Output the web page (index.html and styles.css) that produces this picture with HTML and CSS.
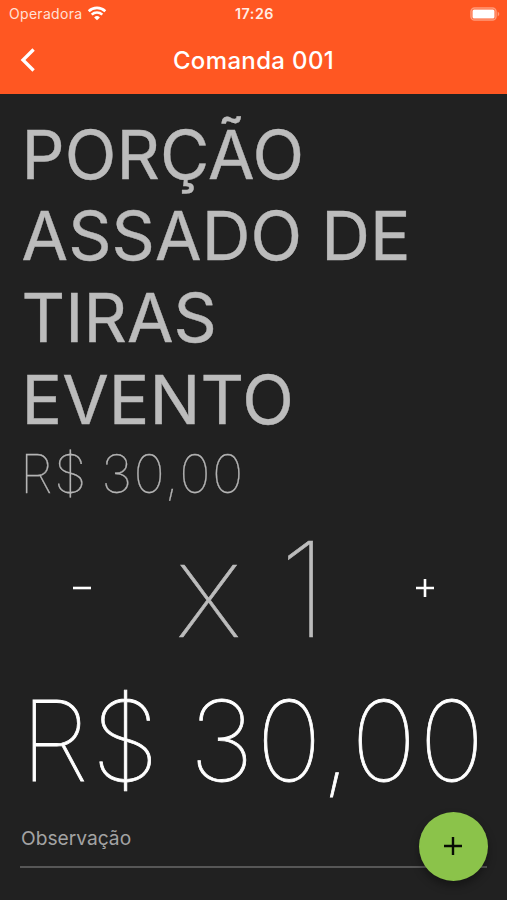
FILE: index.html
```html
<!DOCTYPE html>
<html lang="pt-BR">
<head>
<meta charset="utf-8">
<title>Comanda 001</title>
<link rel="stylesheet" href="styles.css">
</head>
<body>
<div class="app">
  <header class="header">
    <div class="status">
      <div class="carrier"><span>Operadora</span>
        <svg class="wifi" viewBox="0 0 20 15" width="20" height="15"><path d="M1.700 5.200a12 12 0 0 1 16.600 0M4.700 8.600a7.700 7.700 0 0 1 10.600 0" fill="none" stroke="#fff" stroke-width="2.600"/><path d="M7.100 11.400a4.300 4.300 0 0 1 5.800 0L10 14.300z" fill="#fff"/></svg>
      </div>
      <time class="clock">17:26</time>
      <div class="power"><svg viewBox="0 0 30 14" width="30" height="14"><rect x="1" y="1" width="25" height="12" rx="3.600" fill="none" stroke="#ff9a7a" stroke-width="1.500"/><rect x="2.500" y="2.500" width="22" height="9" rx="1.500" fill="#fff"/><path d="M27.700 4.600q3.200 2.400 0 4.800z" fill="#ff9a7a"/></svg></div>
    </div>
    <div class="nav">
      <svg class="back" viewBox="0 0 16 26" width="16" height="26"><path d="M13.600 2.500L3 13l10.600 10.500" fill="none" stroke="#fff" stroke-width="3.300"/></svg>
      <h1 class="title">Comanda 001</h1>
    </div>
  </header>
  <main class="content">
    <h2 class="product">PORÇÃO ASSADO DE TIRAS EVENTO</h2>
    <p class="price">R$ 30,00</p>
    <div class="quantity">
      <svg class="step" viewBox="0 0 20 20" width="20" height="20"><path d="M1 10h18" stroke="#fff" stroke-width="2.600"/></svg>
      <span class="count">x 1</span>
      <svg class="step" viewBox="0 0 20 20" width="20" height="20"><path d="M1 10h18M10 1v18" stroke="#fff" stroke-width="2.600"/></svg>
    </div>
    <p class="total">R$ 30,00</p>
    <div class="note">Observação</div>
  </main>
  <button class="add" aria-label="Adicionar"><svg viewBox="0 0 20 20" width="20" height="20"><path d="M1 10h18M10 1v18" stroke="#080c04" stroke-width="2.400"/></svg></button>
</div>
</body>
</html>
```
FILE: styles.css
```css
* { box-sizing: border-box; margin: 0; padding: 0; }
body { background: #212121; font-family: Inter, "Liberation Sans", sans-serif; color: #fff; }
.app { position: relative; width: 507px; height: 900px; overflow: hidden; background: #212121; }
.header { height: 94px; background: #ff5722; }
.status { height: 27px; display: grid; grid-template-columns: 1fr auto 1fr; align-items: center; padding: 0 7px 0 9px; }
.carrier { display: flex; align-items: center; gap: 5px; font-size: 14px; letter-spacing: .3px; color: #ffe0d6; }
.clock { font-size: 14.300px; font-weight: 600; letter-spacing: .5px; color: #ffece5; }
.power { display: flex; justify-content: flex-end; }
.nav { height: 66px; display: grid; grid-template-columns: 40px 1fr 40px; align-items: center; padding: 0 20px; }
.title { font-size: 24px; font-weight: 500; letter-spacing: .35px; text-align: center; white-space: nowrap; }
.content { padding: 19.500px 20px 0; }
.product { color: #bcbcbc; font-size: 67.500px; line-height: 81.700px; font-weight: 400; -webkit-text-stroke: .4px #bcbcbc; letter-spacing: .1px; padding-left: 1.500px; width: 440px; }
.price { color: #b4b4b4; font-size: 53px; line-height: 68px; font-weight: 100; -webkit-text-stroke: .3px #b4b4b4; letter-spacing: 1.4px; word-spacing: -3px; white-space: nowrap; }
.quantity { height: 166px; display: grid; grid-template-columns: 124px 1fr 124px; align-items: center; justify-items: center; padding-bottom: 5px; }
.step { margin-bottom: 4px; }
.count { color: #bcbcbc; font-size: 132.500px; line-height: 163px; font-weight: 100; -webkit-text-stroke: .6px #bcbcbc; white-space: nowrap; padding-right: 4px; }
.total { font-size: 111px; line-height: 134px; font-weight: 100; -webkit-text-stroke: .8px #fff; letter-spacing: 2.400px; word-spacing: -6px; margin-left: .5px; white-space: nowrap; }
.note { height: 60px; border-bottom: 2px solid #575757; color: #a3a3a3; font-size: 19.200px; line-height: 60px; padding-left: 1px; }
.add { position: absolute; left: 418.500px; top: 811.500px; width: 69px; height: 69px; border: 0; border-radius: 50%; background: #8bc34a; display: flex; align-items: center; justify-content: center; box-shadow: 0 5px 9px rgba(0,0,0,.35); }
```
